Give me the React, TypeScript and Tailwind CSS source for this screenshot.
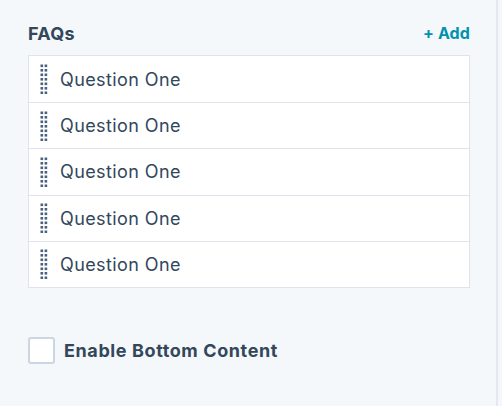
import React from "react";

function Handle() {
  const ys = [0, 1, 2, 3, 4, 5, 6];
  return (
    <svg width="8" height="30" viewBox="0 0 8 30" className="block">
      {ys.map((i) => (
        <g key={i} fill="#4a6280">
          <rect x="0.5" y={0.5 + i * 4.5} width="2.6" height="2.6" />
          <rect x="4.6" y={0.5 + i * 4.5} width="2.6" height="2.6" />
        </g>
      ))}
    </svg>
  );
}

export default function App() {
  const rows = [0, 1, 2, 3, 4];
  return (
    <div className="w-[502px] h-[406px] bg-[#f5f8fa] flex" style={{ fontFamily: "Inter, 'Open Sans', sans-serif" }}>
      <div className="w-[498px] border-r-2 border-[#e4e9ef] pl-[28px] pr-[26px] pt-[22px]">
        <div className="flex items-center justify-between h-[22px]">
          <span className="text-[18px] font-bold text-[#33475b] tracking-[0.3px]">FAQs</span>
          <span className="text-[16px] font-bold text-[#0091ae] tracking-[0.1px]">+ Add</span>
        </div>
        <div className="mt-[11px] bg-white border border-[#dfe3eb]">
          {rows.map((r) => (
            <div key={r} className={`h-[46.2px] flex items-center pl-[11px] ${r > 0 ? "border-t border-[#dfe3eb]" : ""}`}>
              <Handle />
              <span className="ml-[12px] text-[18px] tracking-[0.4px] text-[#33475b]">Question One</span>
            </div>
          ))}
        </div>
        <div className="mt-[49px] flex items-center">
          <span className="block w-[27px] h-[27px] bg-white border-2 border-[#cbd6e2] rounded-[3px]" />
          <span className="ml-[9px] text-[18px] tracking-[0.6px] font-bold text-[#33475b]">Enable Bottom Content</span>
        </div>
      </div>
    </div>
  );
}
